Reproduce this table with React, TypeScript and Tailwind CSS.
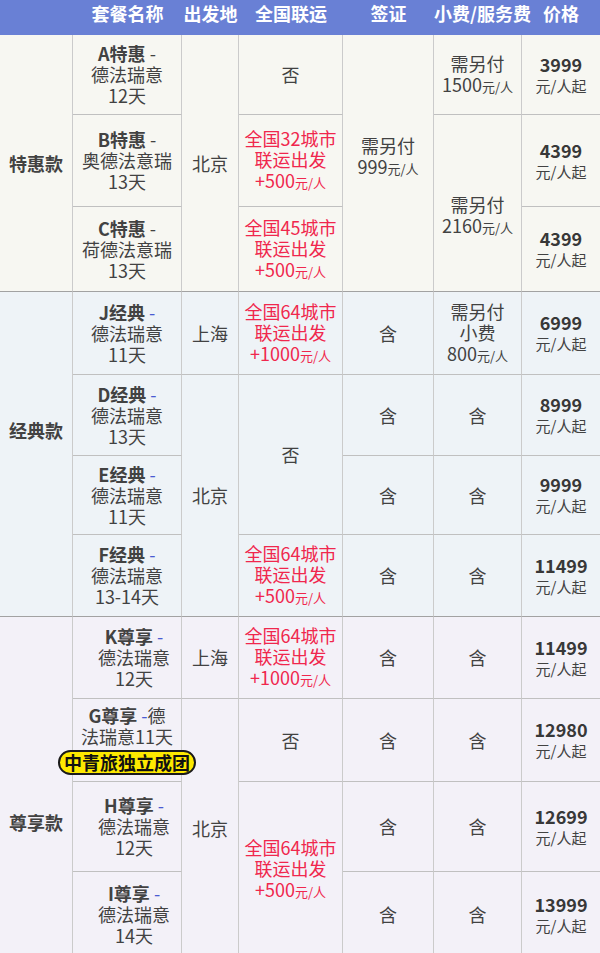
import clsx from 'clsx';
import type { ReactNode } from 'react';

type TdProps = {
  rs?: number;
  end?: boolean;
  edge?: boolean;
  className?: string;
  children?: ReactNode;
};

// one body cell: right + bottom border, darker bottom at the end of a group
const Td = ({ rs, end, edge, className, children }: TdProps) => (
  <td
    rowSpan={rs}
    className={clsx(
      'p-0 text-center align-middle border-b',
      edge ? '' : 'border-r border-r-[#cbcbcb]',
      end ? 'border-b-[#a2a2a2]' : 'border-b-[#c0c0c0]',
      className
    )}
  >
    {children}
  </td>
);

const Name = ({ code, blue, lines, shift }: { code: string; blue?: boolean; lines: string[]; shift?: boolean }) => (
  <div className={clsx('text-[18px] leading-[21px]', shift && 'pl-[14px]')}>
    <div>
      <span className="font-bold">{code}</span>{' '}
      <span className={blue ? 'text-[#4a5bd2]' : ''}>-</span>
    </div>
    {lines.map((l) => (
      <div key={l}>{l}</div>
    ))}
  </div>
);

const Transit = ({ city, fee }: { city: string; fee: string }) => (
  <div className="text-[18px] leading-[21px] text-[#f0274d]">
    <div>全国{city}城市</div>
    <div>联运出发</div>
    <div>
      +{fee}
      <span className="text-[13px]">元/人</span>
    </div>
  </div>
);

const Pay = ({ amount, tip }: { amount: string; tip?: boolean }) => (
  <div className="text-[18px] leading-[21px]">
    <div>需另付</div>
    {tip && <div>小费</div>}
    <div>
      {amount}
      <span className="text-[13px]">元/人</span>
    </div>
  </div>
);

const Price = ({ v }: { v: string }) => (
  <div>
    <div className="text-[18px] font-bold leading-[22px] text-[#383838]">{v}</div>
    <div className="text-[15px] leading-[22px]">元/人起</div>
  </div>
);

const Text = ({ children }: { children: ReactNode }) => <div className="text-[18px] leading-[21px]">{children}</div>;

export default function App() {
  return (
    <div className="w-[600px] h-[953px] overflow-hidden bg-white font-['Noto_Sans_CJK_SC','Noto_Sans',sans-serif] text-[#424242]">
      <table className="w-[600px] table-fixed border-separate border-spacing-0">
        <colgroup>
          <col className="w-[73px]" />
          <col className="w-[109px]" />
          <col className="w-[57px]" />
          <col className="w-[104px]" />
          <col className="w-[91px]" />
          <col className="w-[88px]" />
          <col className="w-[78px]" />
        </colgroup>
        <thead>
          <tr className="h-[35px] bg-[#6980d5] text-white text-[18px] font-bold">
            <th className="p-0"></th>
            <th className="p-0 pb-[10px] font-bold leading-[24px] whitespace-nowrap">套餐名称</th>
            <th className="p-0 pb-[10px] font-bold leading-[24px] whitespace-nowrap">出发地</th>
            <th className="p-0 pb-[10px] font-bold leading-[24px] whitespace-nowrap">全国联运</th>
            <th className="p-0 pb-[10px] font-bold leading-[24px] whitespace-nowrap">签证</th>
            <th className="p-0 pb-[10px] font-bold leading-[24px] whitespace-nowrap">小费/服务费</th>
            <th className="p-0 pb-[10px] font-bold leading-[24px] whitespace-nowrap">价格</th>
          </tr>
        </thead>

        {/* 特惠款 */}
        <tbody className="bg-[#f7f7f2]">
          <tr className="h-[80px]">
            <Td rs={3} end>
              <div className="text-[18px] font-bold leading-[21px]">特惠款</div>
            </Td>
            <Td>
              <Name code="A特惠" lines={['德法瑞意', '12天']} />
            </Td>
            <Td rs={3} end>
              <Text>北京</Text>
            </Td>
            <Td>
              <Text>否</Text>
            </Td>
            <Td rs={3} end className="pb-[12px]">
              <Pay amount="999" />
            </Td>
            <Td>
              <Pay amount="1500" />
            </Td>
            <Td edge>
              <Price v="3999" />
            </Td>
          </tr>
          <tr className="h-[92px]">
            <Td>
              <Name code="B特惠" lines={['奥德法意瑞', '13天']} />
            </Td>
            <Td>
              <Transit city="32" fee="500" />
            </Td>
            <Td rs={2} end className="pt-[26px]">
              <Pay amount="2160" />
            </Td>
            <Td edge>
              <Price v="4399" />
            </Td>
          </tr>
          <tr className="h-[85px]">
            <Td end>
              <Name code="C特惠" lines={['荷德法意瑞', '13天']} />
            </Td>
            <Td end>
              <Transit city="45" fee="500" />
            </Td>
            <Td edge end>
              <Price v="4399" />
            </Td>
          </tr>
        </tbody>

        {/* 经典款 */}
        <tbody className="bg-[#eef3f7]">
          <tr className="h-[83px]">
            <Td rs={4} end className="pb-[48px]">
              <div className="text-[18px] font-bold leading-[21px]">经典款</div>
            </Td>
            <Td>
              <Name code="J经典" blue lines={['德法瑞意', '11天']} />
            </Td>
            <Td>
              <Text>上海</Text>
            </Td>
            <Td>
              <Transit city="64" fee="1000" />
            </Td>
            <Td>
              <Text>含</Text>
            </Td>
            <Td>
              <Pay amount="800" tip />
            </Td>
            <Td edge>
              <Price v="6999" />
            </Td>
          </tr>
          <tr className="h-[81px]">
            <Td>
              <Name code="D经典" blue lines={['德法瑞意', '13天']} />
            </Td>
            <Td rs={3} end>
              <Text>北京</Text>
            </Td>
            <Td rs={2}>
              <Text>否</Text>
            </Td>
            <Td>
              <Text>含</Text>
            </Td>
            <Td>
              <Text>含</Text>
            </Td>
            <Td edge>
              <Price v="8999" />
            </Td>
          </tr>
          <tr className="h-[79px]">
            <Td>
              <Name code="E经典" blue lines={['德法瑞意', '11天']} />
            </Td>
            <Td>
              <Text>含</Text>
            </Td>
            <Td>
              <Text>含</Text>
            </Td>
            <Td edge>
              <Price v="9999" />
            </Td>
          </tr>
          <tr className="h-[82px]">
            <Td end>
              <Name code="F经典" blue lines={['德法瑞意', '13-14天']} />
            </Td>
            <Td end>
              <Transit city="64" fee="500" />
            </Td>
            <Td end>
              <Text>含</Text>
            </Td>
            <Td end>
              <Text>含</Text>
            </Td>
            <Td edge end>
              <Price v="11499" />
            </Td>
          </tr>
        </tbody>

        {/* 尊享款 */}
        <tbody className="bg-[#f3f1f8]">
          <tr className="h-[82px]">
            <Td rs={4} className="pt-[70px]">
              <div className="text-[18px] font-bold leading-[21px]">尊享款</div>
            </Td>
            <Td>
              <Name code="K尊享" blue shift lines={['德法瑞意', '12天']} />
            </Td>
            <Td>
              <Text>上海</Text>
            </Td>
            <Td>
              <Transit city="64" fee="1000" />
            </Td>
            <Td>
              <Text>含</Text>
            </Td>
            <Td>
              <Text>含</Text>
            </Td>
            <Td edge>
              <Price v="11499" />
            </Td>
          </tr>
          <tr className="h-[83px]">
            <Td>
              <div className="text-[18px] leading-[21px]">
                <div>
                  <span className="font-bold">G尊享</span> <span className="text-[#4a5bd2]">-</span>德
                </div>
                <div>法瑞意11天</div>
                <div className="mt-[3px] flex justify-center">
                  <span className="relative z-10 whitespace-nowrap rounded-full border-2 border-[#1a1a1a] bg-[#fde900] px-[4px] text-[18px] font-bold leading-[21px] text-[#111]">
                    中青旅独立成团
                  </span>
                </div>
              </div>
            </Td>
            <Td rs={3}>
              <Text>北京</Text>
            </Td>
            <Td>
              <Text>否</Text>
            </Td>
            <Td>
              <Text>含</Text>
            </Td>
            <Td>
              <Text>含</Text>
            </Td>
            <Td edge>
              <Price v="12980" />
            </Td>
          </tr>
          <tr className="h-[90px]">
            <Td>
              <Name code="H尊享" blue shift lines={['德法瑞意', '12天']} />
            </Td>
            <Td rs={2}>
              <Transit city="64" fee="500" />
            </Td>
            <Td>
              <Text>含</Text>
            </Td>
            <Td>
              <Text>含</Text>
            </Td>
            <Td edge>
              <Price v="12699" />
            </Td>
          </tr>
          <tr className="h-[86px]">
            <Td>
              <Name code="I尊享" blue shift lines={['德法瑞意', '14天']} />
            </Td>
            <Td>
              <Text>含</Text>
            </Td>
            <Td>
              <Text>含</Text>
            </Td>
            <Td edge>
              <Price v="13999" />
            </Td>
          </tr>
        </tbody>
      </table>
    </div>
  );
}
